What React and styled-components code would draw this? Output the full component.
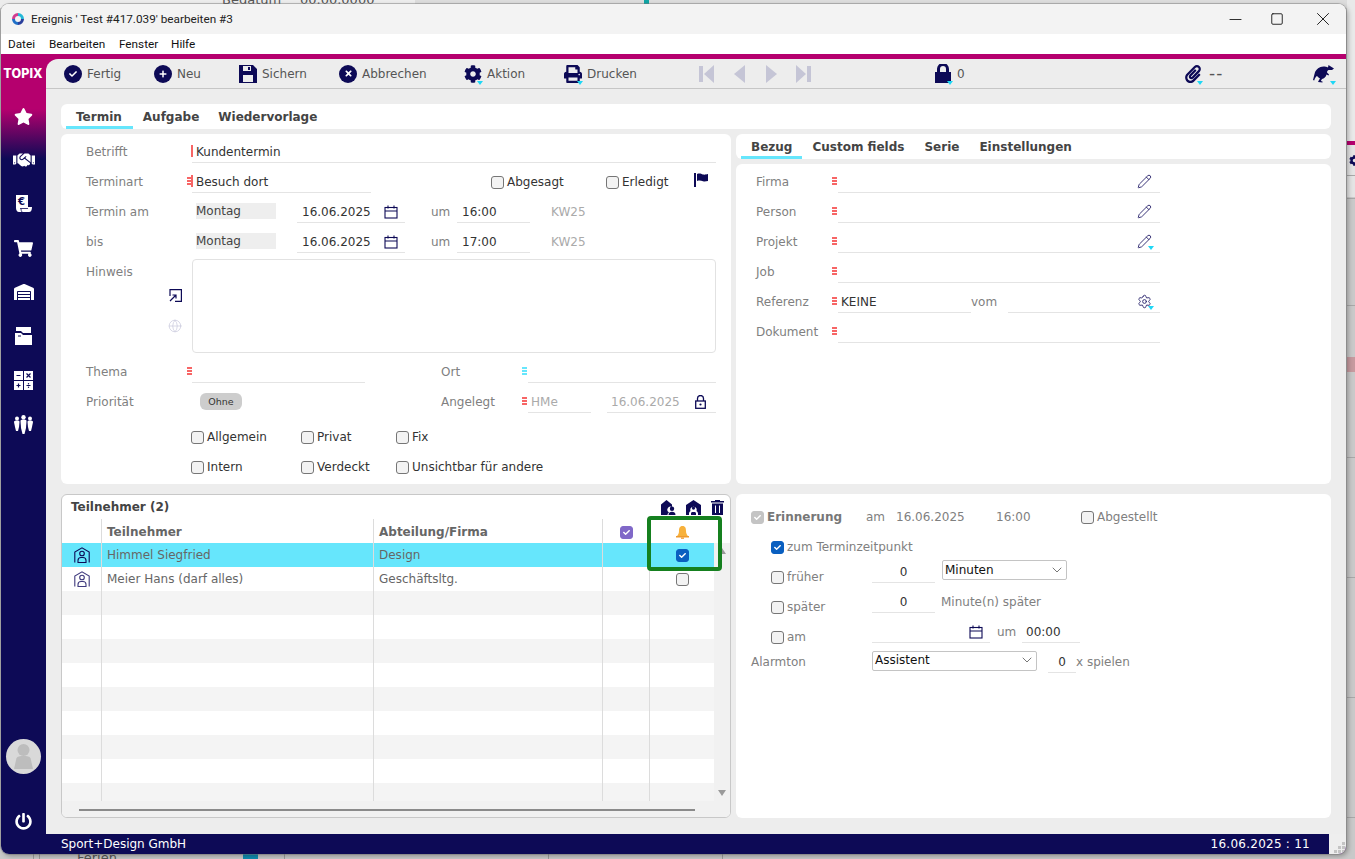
import React from "react";
import styled, { createGlobalStyle } from "styled-components";
import { FaStar, FaHandshake, FaShoppingCart, FaWarehouse, FaPowerOff, FaCog, FaPrint, FaPaperclip, FaCheck, FaPlus, FaTimes } from "react-icons/fa";
import { Pencil, Settings, Globe, ChevronDown, Minus, Square, X } from "lucide-react";

const NAVY = "#0d0a56";
const MAGENTA = "#b5006e";
const CYAN = "#66e6fc";

const Global = createGlobalStyle`
  html, body { margin: 0; padding: 0; width: 1355px; height: 859px; overflow: hidden; }
  body { font-family: "DejaVu Sans", sans-serif; font-size: 12px; background: #c9c9c9; }
  * { box-sizing: border-box; }
`;

const Desktop = styled.div`
  position: relative;
  width: 1355px;
  height: 859px;
  overflow: hidden;
  background: #c9c9c9;
`;
const BackTop = styled.div`
  position: absolute; left: 0; top: 0; width: 1355px; height: 8px;
  background: linear-gradient(90deg, #ececec 0 415px, #dcdcdc 415px 1355px);
  color: #666;
`;
const BackText = styled.span`
  position: absolute;
  left: ${p => p.$x}px;
  top: ${p => p.$y}px;
  font-size: 13px;
  line-height: 14px;
  color: #555;
`;
const BackTeal = styled.div`
  position: absolute; left: 644px; top: 0; width: 5px; height: 5px; background: #10a5a5;
`;
const BackRight = styled.div`
  position: absolute; left: 1347px; top: 0; width: 8px; height: 859px;
  background: linear-gradient(180deg, #e9e9e9 0 141px, ${MAGENTA} 141px 145px, #e4e4e4 145px 197px, #c9c9c9 197px 357px, #c69a9f 357px 372px, #c9c9c9 372px 859px);
`;
const BackTick = styled.div`
  position: absolute; left: 1347px; top: ${p => p.$y}px; width: 8px; height: 1px; background: #a8a8a8;
`;
const BackGear = styled.div`
  position: absolute; left: 1349px; top: 155px; color: ${NAVY}; display: flex;
`;
const BackCheck = styled.div`
  position: absolute; left: 243px; top: 852px; width: 15px; height: 12px; background: #0f8cb0;
`;
const BackLine = styled.div`
  position: absolute; left: ${p => p.$x}px; top: 852px; width: 1px; height: 7px; background: #9c9c9c;
`;

const Win = styled.div`
  position: absolute;
  left: 1px;
  top: 4px;
  width: 1345px;
  height: 850px;
  display: flex;
  flex-direction: column;
  border-radius: 8px;
  overflow: hidden;
  background: #fff;
  box-shadow: 0 0 0 1px rgba(120,120,120,.45), 2px 2px 5px rgba(0,0,0,.3);
`;
const TitleBar = styled.div`
  height: 30px;
  background: #f3f3f3;
  display: flex;
  align-items: center;
  padding-left: 11px;
  color: #222;
  font-family: Roboto, sans-serif;
  font-size: 11.75px;
`;
const TitleText = styled.span`
  margin-left: 7px;
  flex: 1;
`;
const WinBtn = styled.div`
  width: ${p => p.$w}px;
  display: flex;
  justify-content: center;
  color: #111;
`;
const MenuBar = styled.div`
  height: 20px;
  background: #fff;
  display: flex;
  align-items: center;
  padding: 0 0 1px 7px;
  font-family: Roboto, sans-serif;
  font-size: 11.75px;
  color: #111;
`;
const MenuItem = styled.span`
  width: ${p => p.$w}px;
`;
const Accent = styled.div`
  height: 5px;
  background: ${MAGENTA};
`;
const Body = styled.div`
  flex: 1;
  display: flex;
  min-height: 0;
`;
const Sidebar = styled.div`
  width: 45px;
  display: flex;
  flex-direction: column;
  align-items: center;
  color: #fff;
  background: linear-gradient(180deg, ${MAGENTA} 0 50px, ${NAVY} 100px);
`;
const Logo = styled.div`
  height: 30px;
  line-height: 30px;
  font-family: Inter, sans-serif;
  font-weight: 800;
  font-size: 12.5px;
  letter-spacing: .1px;
  margin-right: 1px;
`;
const SideIcons = styled.div`
  display: flex;
  flex-direction: column;
  align-items: center;
  margin-top: 5px;
`;
const SideIcon = styled.div`
  height: 44px;
  display: flex;
  align-items: center;
  justify-content: center;
`;
const Avatar = styled.div`
  margin-top: auto;
  width: 35px;
  height: 35px;
  border-radius: 50%;
  background: #d9d9d9;
  display: flex;
  overflow: hidden;
  flex: none;
`;
const PowerBtn = styled.div`
  height: 80px;
  padding-top: 39px;
  display: flex;
  justify-content: center;
  flex: none;
`;
const MainCol = styled.div`
  flex: 1;
  display: flex;
  flex-direction: column;
  background: ${MAGENTA};
`;
const Main = styled.div`
  flex: 1;
  background: #ededed;
  border-top-left-radius: 12px;
  display: flex;
  flex-direction: column;
  min-height: 0;
`;
const Toolbar = styled.div`
  height: 30px;
  border-bottom: 1px solid #c6c6c6;
  display: flex;
  align-items: center;
  padding-left: 18px;
  color: #555;
`;
const ToolItem = styled.div`
  width: ${p => p.$w}px;
  display: flex;
  align-items: center;
  gap: 5px;
  flex: none;
`;
const IconWrap = styled.span`
  position: relative;
  display: inline-flex;
  align-items: center;
  justify-content: center;
  color: ${p => p.$color || NAVY};
  flex: none;
`;
const Caret = styled.i`
  position: absolute;
  right: ${p => p.$r ?? -1}px;
  bottom: ${p => p.$b ?? -2}px;
  width: 0;
  height: 0;
  border-left: 3px solid transparent;
  border-right: 3px solid transparent;
  border-top: 4px solid #1fd7f5;
`;
const LongDash = styled.span`
  font-size: 17px;
  line-height: 17px;
  letter-spacing: 1px;
  margin-left: 2px;
`;
const StatusBar = styled.div`
  height: 20px;
  display: flex;
  background: ${NAVY};
  color: #fff;
  align-items: center;
  padding-left: 15px;
`;
const StatusDate = styled.span`
  margin-left: auto;
  margin-right: 19px;
  letter-spacing: .25px;
`;
const Grip = styled.div`
  width: 17px;
  height: 20px;
  background: #eeeeee;
  display: flex;
  align-items: flex-end;
  justify-content: flex-end;
  color: #bbb;
`;
const Content = styled.div`
  flex: 1;
  padding: 15px 15px 16px;
  display: flex;
  flex-direction: column;
  gap: 5px;
`;
const TabCard = styled.div`
  height: 25px;
  background: #fff;
  border-radius: 6px;
  display: flex;
  padding-left: 5px;
  flex: none;
`;
const Tab = styled.div`
  padding: 0 ${p => p.$pr ?? 10}px 0 10px;
  height: 25px;
  line-height: 27px;
  font-weight: 700;
  color: #444;
  border-bottom-style: solid;
  border-bottom-color: ${CYAN};
  border-bottom-width: ${p => (p.$active ? 3 : 0)}px;
`;
const Panels = styled.div`
  display: grid;
  grid-template-columns: 670px 595px;
  grid-template-rows: 350px 324px;
  column-gap: 5px;
  row-gap: 10px;
`;
const Card = styled.div`
  background: #fff;
  border-radius: 6px;
  padding: ${p => p.$pad};
`;
const RightCol = styled.div`
  display: flex;
  flex-direction: column;
  gap: 5px;
  min-height: 0;
`;
const GrowCard = styled(Card)`
  flex: 1;
`;
const Row = styled.div`
  height: 30px;
  display: flex;
  align-items: center;
  margin-left: ${p => p.$ml || 0}px;
  margin-top: ${p => p.$mt || 0}px;
`;
const Label = styled.span`
  width: ${p => p.$w}px;
  margin-left: ${p => p.$ml || 0}px;
  margin-top: 2px;
  color: ${p => p.$color || "#808080"};
  flex: none;
  white-space: nowrap;
`;
const Field = styled.div`
  position: relative;
  flex: none;
  width: ${p => p.$w}px;
  height: 22px;
  margin-top: 2px;
  margin-left: ${p => p.$ml || 0}px;
  padding-left: ${p => p.$pl ?? 4}px;
  padding-right: ${p => p.$pr ?? 0}px;
  display: flex;
  align-items: center;
  justify-content: ${p => (p.$center ? "center" : "space-between")};
  border-bottom: 1px solid #e4e4e4;
  color: ${p => p.$color || "#333"};
`;
const TopField = styled(Field)`
  align-self: flex-start;
  margin-top: 0;
`;
const Dashes = styled.i`
  position: absolute;
  left: ${p => p.$l ?? -5}px;
  top: 6px;
  width: 5px;
  height: 8px;
  background: repeating-linear-gradient(180deg, ${p => p.$color || "#f76565"} 0 2px, transparent 2px 3px);
`;
const ReqBar = styled.i`
  position: absolute;
  left: -1px;
  top: 4px;
  width: 2px;
  height: 12px;
  background: #f76565;
`;
const DayBox = styled.div`
  width: 80px;
  height: 16px;
  line-height: 16px;
  margin-left: 4px;
  background: #eeeeee;
  color: #444;
  flex: none;
`;
const Note = styled.textarea`
  display: block;
  width: 524px;
  height: 94px;
  margin-top: 3px;
  border: 1px solid #e2e2e2;
  border-radius: 4px;
  resize: none;
  outline: none;
  background: #fff;
`;
const NoteRow = styled.div`
  height: 100px;
  display: flex;
`;
const NoteSide = styled.div`
  width: 106px;
  flex: none;
  display: flex;
  flex-direction: column;
  color: #808080;
`;
const NoteLabel = styled.div`
  height: 30px;
  line-height: 32px;
`;
const NoteIcons = styled.div`
  margin-top: 3px;
  margin-right: 10px;
  display: flex;
  flex-direction: column;
  align-items: flex-end;
  gap: 17px;
`;
const Pill = styled.div`
  width: 42px;
  height: 17px;
  margin-left: 8px;
  background: #cdcdcd;
  border-radius: 6px;
  font-size: 9.5px;
  line-height: 17px;
  text-align: center;
  color: #333;
  flex: none;
`;
const CheckGroup = styled.div`
  display: flex;
  align-items: center;
  gap: 3px;
  flex: none;
  width: ${p => (p.$w ? `${p.$w}px` : "auto")};
  margin-left: ${p => p.$ml || 0}px;
  margin-top: 2px;
  color: ${p => p.$color || "#333"};
  font-weight: ${p => p.$bold ? 700 : 400};
`;
const Box = styled.span`
  width: 13px;
  height: 13px;
  flex: none;
  border-radius: 3px;
  display: inline-flex;
  align-items: center;
  justify-content: center;
  color: #fff;
  border: 1px solid ${p => p.$fill || "#767676"};
  background: ${p => p.$fill || "#f3f3f3"};
`;
const CheckBox = ({ checked, fill }) => (
  <Box $fill={fill} role="checkbox" aria-checked={!!checked}>
    {checked && <FaCheck size={7} />}
  </Box>
);
const Lab = ({ w, ml, checked, fill, color, bold, children }) => (
  <CheckGroup $w={w} $ml={ml} $color={color} $bold={bold}>
    <CheckBox checked={checked} fill={fill} />
    <span>{children}</span>
  </CheckGroup>
);

const TableCard = styled.div`
  position: relative;
  background: #fff;
  border: 1px solid #c8c8c8;
  border-radius: 6px;
  display: flex;
  flex-direction: column;
  height: 324px;
`;
const TableTitle = styled.div`
  height: 24px;
  display: flex;
  align-items: center;
  padding: 0 6px 0 9px;
  font-weight: 700;
  color: #444;
`;
const TitleIcons = styled.div`
  margin-left: auto;
  display: flex;
  align-items: center;
  gap: 10px;
`;
const TableBody = styled.div`
  display: flex;
  height: 282px;
`;
const Columns = styled.div`
  width: 652px;
  flex: none;
`;
const GridRow = styled.div`
  display: grid;
  grid-template-columns: 39px 272px 229px 47px 65px;
  height: ${p => p.$h || 24}px;
  background: ${p => p.$bg || "#fff"};
  color: ${p => p.$color || "#666"};
  font-weight: ${p => (p.$head ? 700 : 400)};
`;
const Cell = styled.div`
  display: flex;
  align-items: center;
  justify-content: ${p => (p.$center ? "center" : "flex-start")};
  padding-left: ${p => (p.$center ? 0 : 5)}px;
  padding-top: ${p => (p.$head ? 2 : 0)}px;
  border-left: ${p => (p.$first ? "none" : "1px solid #dcdcdc")};
  min-width: 0;
  white-space: nowrap;
`;
const VScroll = styled.div`
  width: 16px;
  margin-top: 24px;
  background: #f1f1f1;
  display: flex;
  flex-direction: column;
  align-items: center;
  justify-content: space-between;
  padding: 5px 0 5px;
`;
const Tri = styled.i`
  width: 0;
  height: 0;
  border-left: 4px solid transparent;
  border-right: 4px solid transparent;
  ${p => (p.$up ? "border-bottom: 6px solid #9a9a9a;" : "border-top: 6px solid #9a9a9a;")}
`;
const HScroll = styled.div`
  height: 16px;
  background: #f1f1f1;
  border-radius: 0 0 5px 5px;
  padding: 8px 35px 0 17px;
`;
const Thumb = styled.div`
  height: 2px;
  background: #8a8a8a;
`;
const Highlight = styled.div`
  position: absolute;
  left: 585px;
  top: 21px;
  width: 75px;
  height: 55px;
  border: 4px solid #15801f;
  border-radius: 4px;
  pointer-events: none;
`;
const Select = styled.div`
  flex: none;
  align-self: flex-start;
  width: ${p => p.$w}px;
  height: 20px;
  margin-top: -1px;
  margin-left: ${p => p.$ml || 0}px;
  padding: 0 1px 1px 2px;
  display: flex;
  align-items: center;
  justify-content: space-between;
  border: 1px solid #c4c4c4;
  border-radius: 2px;
  background: #fff;
  color: #111;
`;
const AlarmSelect = styled(Select)`
  align-self: center;
  margin-top: -1px;
`;
const HintText = styled.span`
  flex: none;
  align-self: flex-start;
  margin-left: ${p => p.$ml || 0}px;
  width: ${p => (p.$w ? `${p.$w}px` : "auto")};
  line-height: 22px;
  color: #808080;
`;
const Flag = styled.span`
  display: inline-flex;
  margin-top: -3px;
  color: ${NAVY};
`;

const Svg = ({ w, h, vb, children, fill = "currentColor", stroke = "none", sw }) => (
  <svg width={w} height={h} viewBox={vb || `0 0 ${w} ${h}`} fill={fill} stroke={stroke} strokeWidth={sw}>{children}</svg>
);

const CircleInner = styled.span`
  position: absolute;
  inset: 0;
  color: #fff;
  display: flex;
  align-items: center;
  justify-content: center;
`;
const CircleIcon = ({ children }) => (
  <IconWrap>
    <Svg w={18} h={18}><circle cx="9" cy="9" r="9" /></Svg>
    <CircleInner>{children}</CircleInner>
  </IconWrap>
);

const Floppy = () => (
  <Svg w={18} h={18}>
    <path fillRule="evenodd" d="M0 0h14l4 4v14H0zM4 1v5h8V1zM4 10v7h10v-7z" />
    <rect x="9" y="2" width="2" height="3" />
  </Svg>
);
const NavFirst = () => (<Svg w={15} h={18} fill="#c5c5d6"><rect x="0" y="1" width="4" height="16" /><path d="M15 0v18L5 9z" /></Svg>);
const NavPrev = () => (<Svg w={11} h={18} fill="#c5c5d6"><path d="M11 0v18L0 9z" /></Svg>);
const NavNext = () => (<Svg w={11} h={18} fill="#c5c5d6"><path d="M0 0v18L11 9z" /></Svg>);
const NavLast = () => (<Svg w={15} h={18} fill="#c5c5d6"><rect x="11" y="1" width="4" height="16" /><path d="M0 0v18L10 9z" /></Svg>);
const OpenLock = () => (
  <Svg w={17} h={19}>
    <rect x="0" y="8" width="16" height="11" />
    <path d="M2 8V5a6 6 0 0 1 12 0v3h-3V5a3 3 0 0 0-6 0v3z" />
  </Svg>
);
const Kangaroo = () => (
  <Svg w={21} h={18} vb="0 0 21 18">
    <path d="M21 3.500 17 1 15.500 0 15 2.500C13 1.500 10 1 7.500 2 4 3.500 2 6 1.500 9 1 11 .5 13 0 15l1.200.5C2 13 3 11.500 4 11c1 1 2 2 3 2.500L6 15l-1 2 4.500.5v-1l-1.700-.5L9 14c2-.5 4-2 4.500-4.500l2 1 .5-1-2-2c0-1 .5-2 1.500-2.500H19z" />
  </Svg>
);
const Expand = () => (
  <Svg w={13} h={13} fill="none" stroke={NAVY} sw={1.2}>
    <path d="M1 7V.6h11.400v11.800H6" />
    <path d="M1 12 6.500 6.500M3.500 6h3.500v3.500" />
  </Svg>
);
const Calendar = () => (
  <Svg w={14} h={14} fill="none" stroke={NAVY} sw={1.1}>
    <rect x="1" y="2.500" width="12" height="10.500" />
    <path d="M1 6h12M4 .5v3M10 .5v3" />
  </Svg>
);
const FlagIcon = () => (
  <Svg w={15} h={14}>
    <rect x="0" y="0" width="2" height="14" />
    <path d="M3 1c3-1 4 0 6 .5 2 .4 3-.2 5-.5v7c-2 .3-3 .7-5 .3-2-.5-3-1.300-6-.3z" />
  </Svg>
);
const SmallLock = () => (
  <Svg w={11} h={14} fill="none" stroke={NAVY} sw={1.3}>
    <rect x=".7" y="6" width="9.600" height="7.300" />
    <path d="M2.500 6V3.500a3 3 0 0 1 6 0V6" />
    <circle cx="5.500" cy="9.500" r="1.100" fill={NAVY} stroke="none" />
  </Svg>
);
const PersonHouse = ({ color = NAVY }) => (
  <Svg w={16} h={16} fill="none" stroke={color} sw={1.1}>
    <path d="M.8 15.500V5L8 .8 15.200 5v10.500" />
    <circle cx="8" cy="6.500" r="2.300" />
    <path d="M4 15.500v-2a3 3 0 0 1 3-3h2a3 3 0 0 1 3 3v2z" />
  </Svg>
);
const HousePerson = () => (
  <Svg w={15} h={15}>
    <path d="M0 15V4.500L5.500 0 11 4.500V7a3 3 0 0 0-3 5.500c-1 .5-1.500 1.500-1.500 2.500z" />
    <circle cx="11" cy="8.800" r="2.200" />
    <path d="M7.500 15c0-2 1.500-3.200 3.500-3.200s3.500 1.200 3.500 3.200z" />
  </Svg>
);
const HouseA = () => (
  <Svg w={15} h={15}>
    <path fillRule="evenodd" d="M0 15V5L7.500 0 15 5v10h-3v-1.500A3 3 0 0 0 10.500 11a3.200 3.200 0 1 0-6 0A3 3 0 0 0 3 13.500V15zM7.500 6.500a1.600 1.600 0 1 1 0 3.200 1.600 1.600 0 0 1 0-3.200zM5 15v-1.500c0-.8.600-1.500 1.500-1.500h2c.9 0 1.500.7 1.500 1.500V15z" />
  </Svg>
);
const Trash = () => (
  <Svg w={13} h={15}>
    <rect x="0" y="1" width="13" height="1.500" />
    <rect x="4" y="0" width="5" height="1.500" />
    <path fillRule="evenodd" d="M1 3.500h11V15H1zM4 5.500V13h1V5.500zM8 5.500V13h1V5.500z" />
  </Svg>
);
const Bell = () => (
  <Svg w={13} h={13} fill="#f7b13c">
    <path d="M6.500 0C3.500 0 3 2.500 3 5 3 7.500 2 9 1 10h11c-1-1-2-2.500-2-5 0-2.500-.5-5-3.500-5z" />
    <rect x="0" y="10" width="13" height="1.500" fill="#ef9a2d" />
    <rect x="5" y="11.500" width="3" height="1.300" fill="#ef9a2d" />
  </Svg>
);
const Receipt = () => (
  <Svg w={18} h={18} vb="0 0 18 18" fill="#fff">
    <path d="M1 0h12v12h4c0 3-1 5-3 5H4c-2 0-3-2-3-4z" />
    <path d="M6 14c0 1 .3 2 1 3M5 13.500h8" stroke={NAVY} strokeWidth=".8" />
    <text x="3" y="10" fontSize="10" fontWeight="700" fill={NAVY} fontFamily="DejaVu Sans">€</text>
  </Svg>
);
const Folder = () => (
  <Svg w={17} h={18} fill="#fff">
    <path d="M1 0h15v6H8L6 4H1z" />
    <path d="M0 6h6l2 2h9v10H0z" />
    <rect x="3" y="8.500" width="3" height="1" fill={NAVY} />
  </Svg>
);
const Calc = () => (
  <Svg w={19} h={19}>
    <path fill="#fff" d="M0 0h9v9H0zM10 0h9v9h-9zM0 10h9v9H0zM10 10h9v9h-9z" />
    <path stroke={NAVY} strokeWidth="1.200" fill="none" d="M2.500 4.500h4M12.500 2.500l4 4M16.500 2.500l-4 4M4.500 12.500v4M2.500 14.500h4M12.500 14.500h4" />
    <circle cx="14.500" cy="12.800" r=".7" fill={NAVY} />
    <circle cx="14.500" cy="16.200" r=".7" fill={NAVY} />
  </Svg>
);
const People = () => (
  <Svg w={19} h={19} fill="#fff">
    <circle cx="3" cy="3.500" r="2" />
    <circle cx="9.500" cy="2.200" r="2.200" />
    <circle cx="16" cy="3.500" r="2" />
    <path d="M0 7c0-1 1-1.500 3-1.500S5.500 6 5.500 7L5 12l-1 4H2l-1-4z" />
    <path d="M6.500 6c0-1 1-1.500 3-1.500s3 .5 3 1.500L12 13l-1.500 6h-2L7 13z" />
    <path d="M13.500 7c0-1 .5-1.500 2.500-1.500s3 .5 3 1.500l-1 5-1 4h-2l-1-4z" />
  </Svg>
);
const AvatarFigure = () => (
  <Svg w={35} h={35} fill="#bdbdbd">
    <circle cx="17.500" cy="11" r="6" />
    <path d="M10.500 19c1-1.500 3-2 7-2s6 .5 7 2l2.500 11H8z" />
  </Svg>
);
const ResizeDots = () => (
  <Svg w={12} h={12} fill="#c4c4c4">
    <rect x="8" y="0" width="3" height="3" />
    <rect x="4" y="4" width="3" height="3" />
    <rect x="8" y="4" width="3" height="3" />
    <rect x="0" y="8" width="3" height="3" />
    <rect x="4" y="8" width="3" height="3" />
    <rect x="8" y="8" width="3" height="3" />
  </Svg>
);
const WinLogo = () => (
  <Svg w={12} h={12}>
    <path d="M6 0a6 6 0 0 0-6 6h3a3 3 0 0 1 3-3z" fill="#d33a8e" />
    <path d="M0 6a6 6 0 0 0 6 6V9a3 3 0 0 1-3-3z" fill="#1f6fc7" />
    <path d="M6 12a6 6 0 0 0 6-6H9a3 3 0 0 1-3 3z" fill="#2a3f9c" />
    <path d="M12 6a6 6 0 0 0-6-6v3a3 3 0 0 1 3 3z" fill="#22b8d8" />
  </Svg>
);

const rows = [
  { name: "Himmel Siegfried", dept: "Design", bg: CYAN, checked: true },
  { name: "Meier Hans (darf alles)", dept: "Geschäftsltg.", bg: "#fff" },
];
const emptyRows = Array.from({ length: 9 }, (_, i) => i);

const DateField = ({ value, ml }) => (
  <Field $w={108} $ml={ml} $pl={5} $pr={7}>
    <span>{value}</span>
    <IconWrap><Calendar /></IconWrap>
  </Field>
);

const BezugRow = ({ label, icon, caret }) => (
  <Row>
    <Label $w={82}>{label}</Label>
    <Field $w={322} $pr={8}>
      <Dashes $l={-6} />
      <span />
      {icon && (
        <IconWrap $color="#2f2a70">
          {icon}
          {caret && <Caret $r={-2} $b={-1} />}
        </IconWrap>
      )}
    </Field>
  </Row>
);

export default function App() {
  return (
    <Desktop>
      <Global />
      <BackTop>
        <BackText $x={222} $y={-7}>Bedatum</BackText>
        <BackText $x={300} $y={-7}>00.00.0000</BackText>
        <BackTeal />
      </BackTop>
      <BackRight />
      <BackTick $y={175} /><BackTick $y={198} /><BackTick $y={305} /><BackTick $y={457} />
      <BackTick $y={577} /><BackTick $y={697} /><BackTick $y={817} />
      <BackGear><FaCog size={11} /></BackGear>
      <BackLine $x={33} /><BackLine $x={39} /><BackLine $x={284} /><BackLine $x={548} /><BackLine $x={722} />
      <BackText $x={77} $y={851}>Ferien</BackText>
      <BackCheck />

      <Win>
        <TitleBar>
          <WinLogo />
          <TitleText>Ereignis ' Test #417.039' bearbeiten #3</TitleText>
          <WinBtn $w={37}><Minus size={19} strokeWidth={1.1} /></WinBtn>
          <WinBtn $w={46}><Square size={14} strokeWidth={1.5} /></WinBtn>
          <WinBtn $w={46}><X size={22} strokeWidth={1} /></WinBtn>
        </TitleBar>
        <MenuBar>
          <MenuItem $w={41}>Datei</MenuItem>
          <MenuItem $w={70}>Bearbeiten</MenuItem>
          <MenuItem $w={52}>Fenster</MenuItem>
          <MenuItem $w={40}>Hilfe</MenuItem>
        </MenuBar>
        <Accent />
        <Body>
          <Sidebar>
            <Logo>TOPIX</Logo>
            <SideIcons>
              <SideIcon><FaStar size={19} /></SideIcon>
              <SideIcon><FaHandshake size={22} /></SideIcon>
              <SideIcon><Receipt /></SideIcon>
              <SideIcon><FaShoppingCart size={19} /></SideIcon>
              <SideIcon><FaWarehouse size={20} /></SideIcon>
              <SideIcon><Folder /></SideIcon>
              <SideIcon><Calc /></SideIcon>
              <SideIcon><People /></SideIcon>
            </SideIcons>
            <Avatar><AvatarFigure /></Avatar>
            <PowerBtn><FaPowerOff size={17} /></PowerBtn>
          </Sidebar>
          <MainCol>
            <Main>
              <Toolbar>
                <ToolItem $w={90}><CircleIcon><FaCheck size={8} /></CircleIcon>Fertig</ToolItem>
                <ToolItem $w={85}><CircleIcon><FaPlus size={8} /></CircleIcon>Neu</ToolItem>
                <ToolItem $w={100}><IconWrap><Floppy /></IconWrap>Sichern</ToolItem>
                <ToolItem $w={125}><CircleIcon><FaTimes size={9} /></CircleIcon>Abbrechen</ToolItem>
                <ToolItem $w={100}><IconWrap><FaCog size={18} /><Caret /></IconWrap>Aktion</ToolItem>
                <ToolItem $w={135}><IconWrap><FaPrint size={18} /><Caret /></IconWrap>Drucken</ToolItem>
                <ToolItem $w={35}><NavFirst /></ToolItem>
                <ToolItem $w={32}><NavPrev /></ToolItem>
                <ToolItem $w={30}><NavNext /></ToolItem>
                <ToolItem $w={139}><NavLast /></ToolItem>
                <ToolItem $w={249}><IconWrap><OpenLock /><Caret /></IconWrap>0</ToolItem>
                <ToolItem $w={129}><IconWrap><FaPaperclip size={18} /><Caret /></IconWrap><LongDash>--</LongDash></ToolItem>
                <ToolItem $w={24}><IconWrap><Kangaroo /><Caret $r={-2} /></IconWrap></ToolItem>
              </Toolbar>
              <Content>
                <TabCard>
                  <Tab $active $pr={11}>Termin</Tab>
                  <Tab $pr={9}>Aufgabe</Tab>
                  <Tab>Wiedervorlage</Tab>
                </TabCard>
                <Panels>
                  <Card $pad="2px 0 0 25px">
                    <Row>
                      <Label $w={106}>Betrifft</Label>
                      <Field $w={524}><ReqBar />Kundentermin</Field>
                    </Row>
                    <Row>
                      <Label $w={106}>Terminart</Label>
                      <Field $w={179}><Dashes /><ReqBar />Besuch dort</Field>
                      <Lab w={115} ml={120}>Abgesagt</Lab>
                      <Lab w={88}>Erledigt</Lab>
                      <Flag><FlagIcon /></Flag>
                    </Row>
                    <Row>
                      <Label $w={106}>Termin am</Label>
                      <DayBox>Montag</DayBox>
                      <DateField value="16.06.2025" ml={21} />
                      <Label $w={26} $ml={26}>um</Label>
                      <Field $w={73} $pl={5}>16:00</Field>
                      <Label $w={50} $ml={21} $color="#aaa">KW25</Label>
                    </Row>
                    <Row>
                      <Label $w={106}>bis</Label>
                      <DayBox>Montag</DayBox>
                      <DateField value="16.06.2025" ml={21} />
                      <Label $w={26} $ml={26}>um</Label>
                      <Field $w={73} $pl={5}>17:00</Field>
                      <Label $w={50} $ml={21} $color="#aaa">KW25</Label>
                    </Row>
                    <NoteRow>
                      <NoteSide>
                        <NoteLabel>Hinweis</NoteLabel>
                        <NoteIcons>
                          <IconWrap><Expand /></IconWrap>
                          <IconWrap $color="#c9c9dd"><Globe size={14} strokeWidth={1.2} /></IconWrap>
                        </NoteIcons>
                      </NoteSide>
                      <Note aria-label="Hinweis" />
                    </NoteRow>
                    <Row>
                      <Label $w={106}>Thema</Label>
                      <Field $w={173}><Dashes /></Field>
                      <Label $w={87} $ml={76}>Ort</Label>
                      <Field $w={188}><Dashes $l={-6} $color={CYAN} /></Field>
                    </Row>
                    <Row>
                      <Label $w={106}>Priorität</Label>
                      <Pill>Ohne</Pill>
                      <Label $w={87} $ml={199}>Angelegt</Label>
                      <Field $w={63} $pl={3} $color="#aaa"><Dashes $l={-6} />HMe</Field>
                      <Field $w={109} $ml={16} $pr={10} $color="#aaa">
                        16.06.2025
                        <IconWrap><SmallLock /></IconWrap>
                      </Field>
                    </Row>
                    <Row $mt={5}>
                      <Lab w={110} ml={105}>Allgemein</Lab>
                      <Lab w={95}>Privat</Lab>
                      <Lab>Fix</Lab>
                    </Row>
                    <Row>
                      <Lab w={110} ml={105}>Intern</Lab>
                      <Lab w={95}>Verdeckt</Lab>
                      <Lab>Unsichtbar für andere</Lab>
                    </Row>
                  </Card>
                  <RightCol>
                    <TabCard>
                      <Tab $active>Bezug</Tab>
                      <Tab>Custom fields</Tab>
                      <Tab>Serie</Tab>
                      <Tab>Einstellungen</Tab>
                    </TabCard>
                    <GrowCard $pad="2px 0 0 20px">
                      <BezugRow label="Firma" icon={<Pencil size={15} strokeWidth={1.5} />} />
                      <BezugRow label="Person" icon={<Pencil size={15} strokeWidth={1.5} />} />
                      <BezugRow label="Projekt" icon={<Pencil size={15} strokeWidth={1.5} />} caret />
                      <BezugRow label="Job" />
                      <Row>
                        <Label $w={82}>Referenz</Label>
                        <Field $w={133} $pl={3}><Dashes $l={-6} />KEINE</Field>
                        <Label $w={37}>vom</Label>
                        <Field $w={152} $pr={8}>
                          <span />
                          <IconWrap $color="#2f2a70"><Settings size={15} strokeWidth={1.5} /><Caret $r={-2} $b={-1} /></IconWrap>
                        </Field>
                      </Row>
                      <BezugRow label="Dokument" />
                    </GrowCard>
                  </RightCol>
                  <TableCard>
                    <TableTitle>
                      Teilnehmer (2)
                      <TitleIcons>
                        <IconWrap><HousePerson /></IconWrap>
                        <IconWrap><HouseA /></IconWrap>
                        <IconWrap><Trash /></IconWrap>
                      </TitleIcons>
                    </TableTitle>
                    <TableBody>
                      <Columns>
                        <GridRow $head>
                          <Cell $first $head />
                          <Cell $head>Teilnehmer</Cell>
                          <Cell $head>Abteilung/Firma</Cell>
                          <Cell $head $center><CheckBox checked fill="#8068c8" /></Cell>
                          <Cell $head $center><Bell /></Cell>
                        </GridRow>
                        {rows.map(r => (
                          <GridRow key={r.name} $bg={r.bg}>
                            <Cell $first $center><PersonHouse color={r.checked ? NAVY : "#3f3a7e"} /></Cell>
                            <Cell>{r.name}</Cell>
                            <Cell>{r.dept}</Cell>
                            <Cell />
                            <Cell $center>
                              {r.checked ? <CheckBox checked fill="#0a5fc0" /> : <CheckBox />}
                            </Cell>
                          </GridRow>
                        ))}
                        {emptyRows.map(i => (
                          <GridRow key={i} $bg={i % 2 === 0 ? "#f4f4f4" : "#fff"} $h={i === 8 ? 18 : 24}>
                            <Cell $first /><Cell /><Cell /><Cell /><Cell />
                          </GridRow>
                        ))}
                      </Columns>
                      <VScroll>
                        <Tri $up />
                        <Tri />
                      </VScroll>
                    </TableBody>
                    <HScroll><Thumb /></HScroll>
                    <Highlight />
                  </TableCard>
                  <Card $pad="7px 0 0 15px">
                    <Row>
                      <Lab w={115} checked fill="#c4c4c4" color="#777" bold>Erinnerung</Lab>
                      <Label $w={30}>am</Label>
                      <Label $w={100}>16.06.2025</Label>
                      <Label $w={85}>16:00</Label>
                      <Lab color="#808080">Abgestellt</Lab>
                    </Row>
                    <Row $ml={20}>
                      <Lab checked fill="#0a5fc0" color="#808080">zum Terminzeitpunkt</Lab>
                    </Row>
                    <Row $ml={20}>
                      <Lab w={101} color="#808080">früher</Lab>
                      <TopField $w={63} $center $pl={0}>0</TopField>
                      <Select $w={125} $ml={7}>Minuten<ChevronDown size={16} strokeWidth={1.1} color="#444" /></Select>
                    </Row>
                    <Row $ml={20}>
                      <Lab w={101} color="#808080">später</Lab>
                      <TopField $w={63} $center $pl={0}>0</TopField>
                      <HintText $ml={6}>Minute(n) später</HintText>
                    </Row>
                    <Row $ml={20}>
                      <Lab w={101} color="#808080">am</Lab>
                      <TopField $w={118} $pr={7}>
                        <span />
                        <IconWrap><Calendar /></IconWrap>
                      </TopField>
                      <HintText $ml={7} $w={25}>um</HintText>
                      <TopField $w={58}>00:00</TopField>
                    </Row>
                    <Row $mt={-5}>
                      <Label $w={121}>Alarmton</Label>
                      <AlarmSelect $w={165}>Assistent<ChevronDown size={16} strokeWidth={1.1} color="#444" /></AlarmSelect>
                      <Field $w={28} $ml={11} $center $pl={0}>0</Field>
                      <Label $w={70}>x spielen</Label>
                    </Row>
                  </Card>
                </Panels>
              </Content>
            </Main>
            <StatusBar>
              Sport+Design GmbH
              <StatusDate>16.06.2025 : 11</StatusDate>
              <Grip><ResizeDots /></Grip>
            </StatusBar>
          </MainCol>
        </Body>
      </Win>
    </Desktop>
  );
}
